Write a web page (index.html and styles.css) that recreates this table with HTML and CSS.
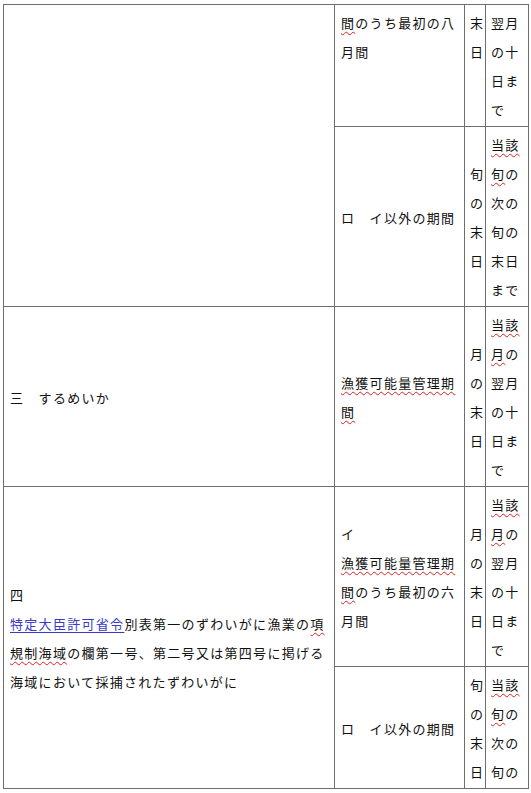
FILE: index.html
```html
<!DOCTYPE html>
<html lang="ja">
<head>
<meta charset="utf-8">
<title>表</title>
<link rel="stylesheet" href="styles.css">
</head>
<body>
<table class="grid">
  <colgroup>
    <col class="c-kind">
    <col class="c-period">
    <col class="c-end">
    <col class="c-due">
  </colgroup>
  <tbody>
    <tr class="row-top">
      <td class="kind" rowspan="2"></td>
      <td class="period"><span class="sp">間</span>のうち最初の八月間</td>
      <td class="end">末日</td>
      <td class="due">翌月の十日まで</td>
    </tr>
    <tr>
      <td class="period">ロ　イ以外の期間</td>
      <td class="end">旬の末日</td>
      <td class="due"><span class="sp">当該</span><span class="sp">旬</span>の次の旬の末日まで</td>
    </tr>
    <tr>
      <td class="kind">三　するめいか</td>
      <td class="period"><span class="sp">漁獲可能量管理期間</span></td>
      <td class="end">月の末日</td>
      <td class="due"><span class="sp">当該</span><span class="sp">月</span>の翌月の十日まで</td>
    </tr>
    <tr>
      <td class="kind" rowspan="2">四<br><a class="ref" href="#">特定大臣許可省令</a>別表第一のずわいがに漁業の<span class="sp">項</span><br><span class="sp">規制海域</span>の欄第一号、第二号又は第四号に掲げる<br>海域において採捕されたずわいがに</td>
      <td class="period">イ<br><span class="sp">漁獲可能量管理期間</span>のうち最初の六月間</td>
      <td class="end">月の末日</td>
      <td class="due"><span class="sp">当該</span><span class="sp">月</span>の翌月の十日まで</td>
    </tr>
    <tr>
      <td class="period">ロ　イ以外の期間</td>
      <td class="end">旬の末日</td>
      <td class="due"><span class="sp">当該</span><span class="sp">旬</span>の次の旬の</td>
    </tr>
  </tbody>
</table>
</body>
</html>
```

FILE: styles.css
```css
html, body {
  margin: 0;
  padding: 0;
  background: #ffffff;
}

body {
  padding: 4px 0 0 3px;
  font-family: "Noto Sans CJK JP", "Noto Sans", sans-serif;
  font-size: 13px;
  color: #111111;
}

.grid {
  border-collapse: collapse;
  table-layout: fixed;
  width: 526px;
}

.c-kind { width: 331px; }
.c-period { width: 130px; }
.c-end { width: 21px; }
.c-due { width: 43px; }

.grid td {
  border: 1px solid #6e6e6e;
  vertical-align: middle;
  line-height: 29px;
  letter-spacing: 1.3px;
  padding: 3px 6px 2px 6px;
  word-break: break-all;
}

.grid td.end {
  padding-left: 5px;
  padding-right: 0;
}

.grid td.due {
  padding-left: 5px;
  padding-right: 0;
}

.grid .row-top td {
  vertical-align: top;
}

.sp {
  text-decoration: underline wavy #e02020;
  text-decoration-thickness: 1px;
  text-underline-offset: 3px;
}

.ref {
  color: #3a3ac8;
  text-decoration: underline;
  text-decoration-color: #3a3ac8;
  text-underline-offset: 3px;
}
```
